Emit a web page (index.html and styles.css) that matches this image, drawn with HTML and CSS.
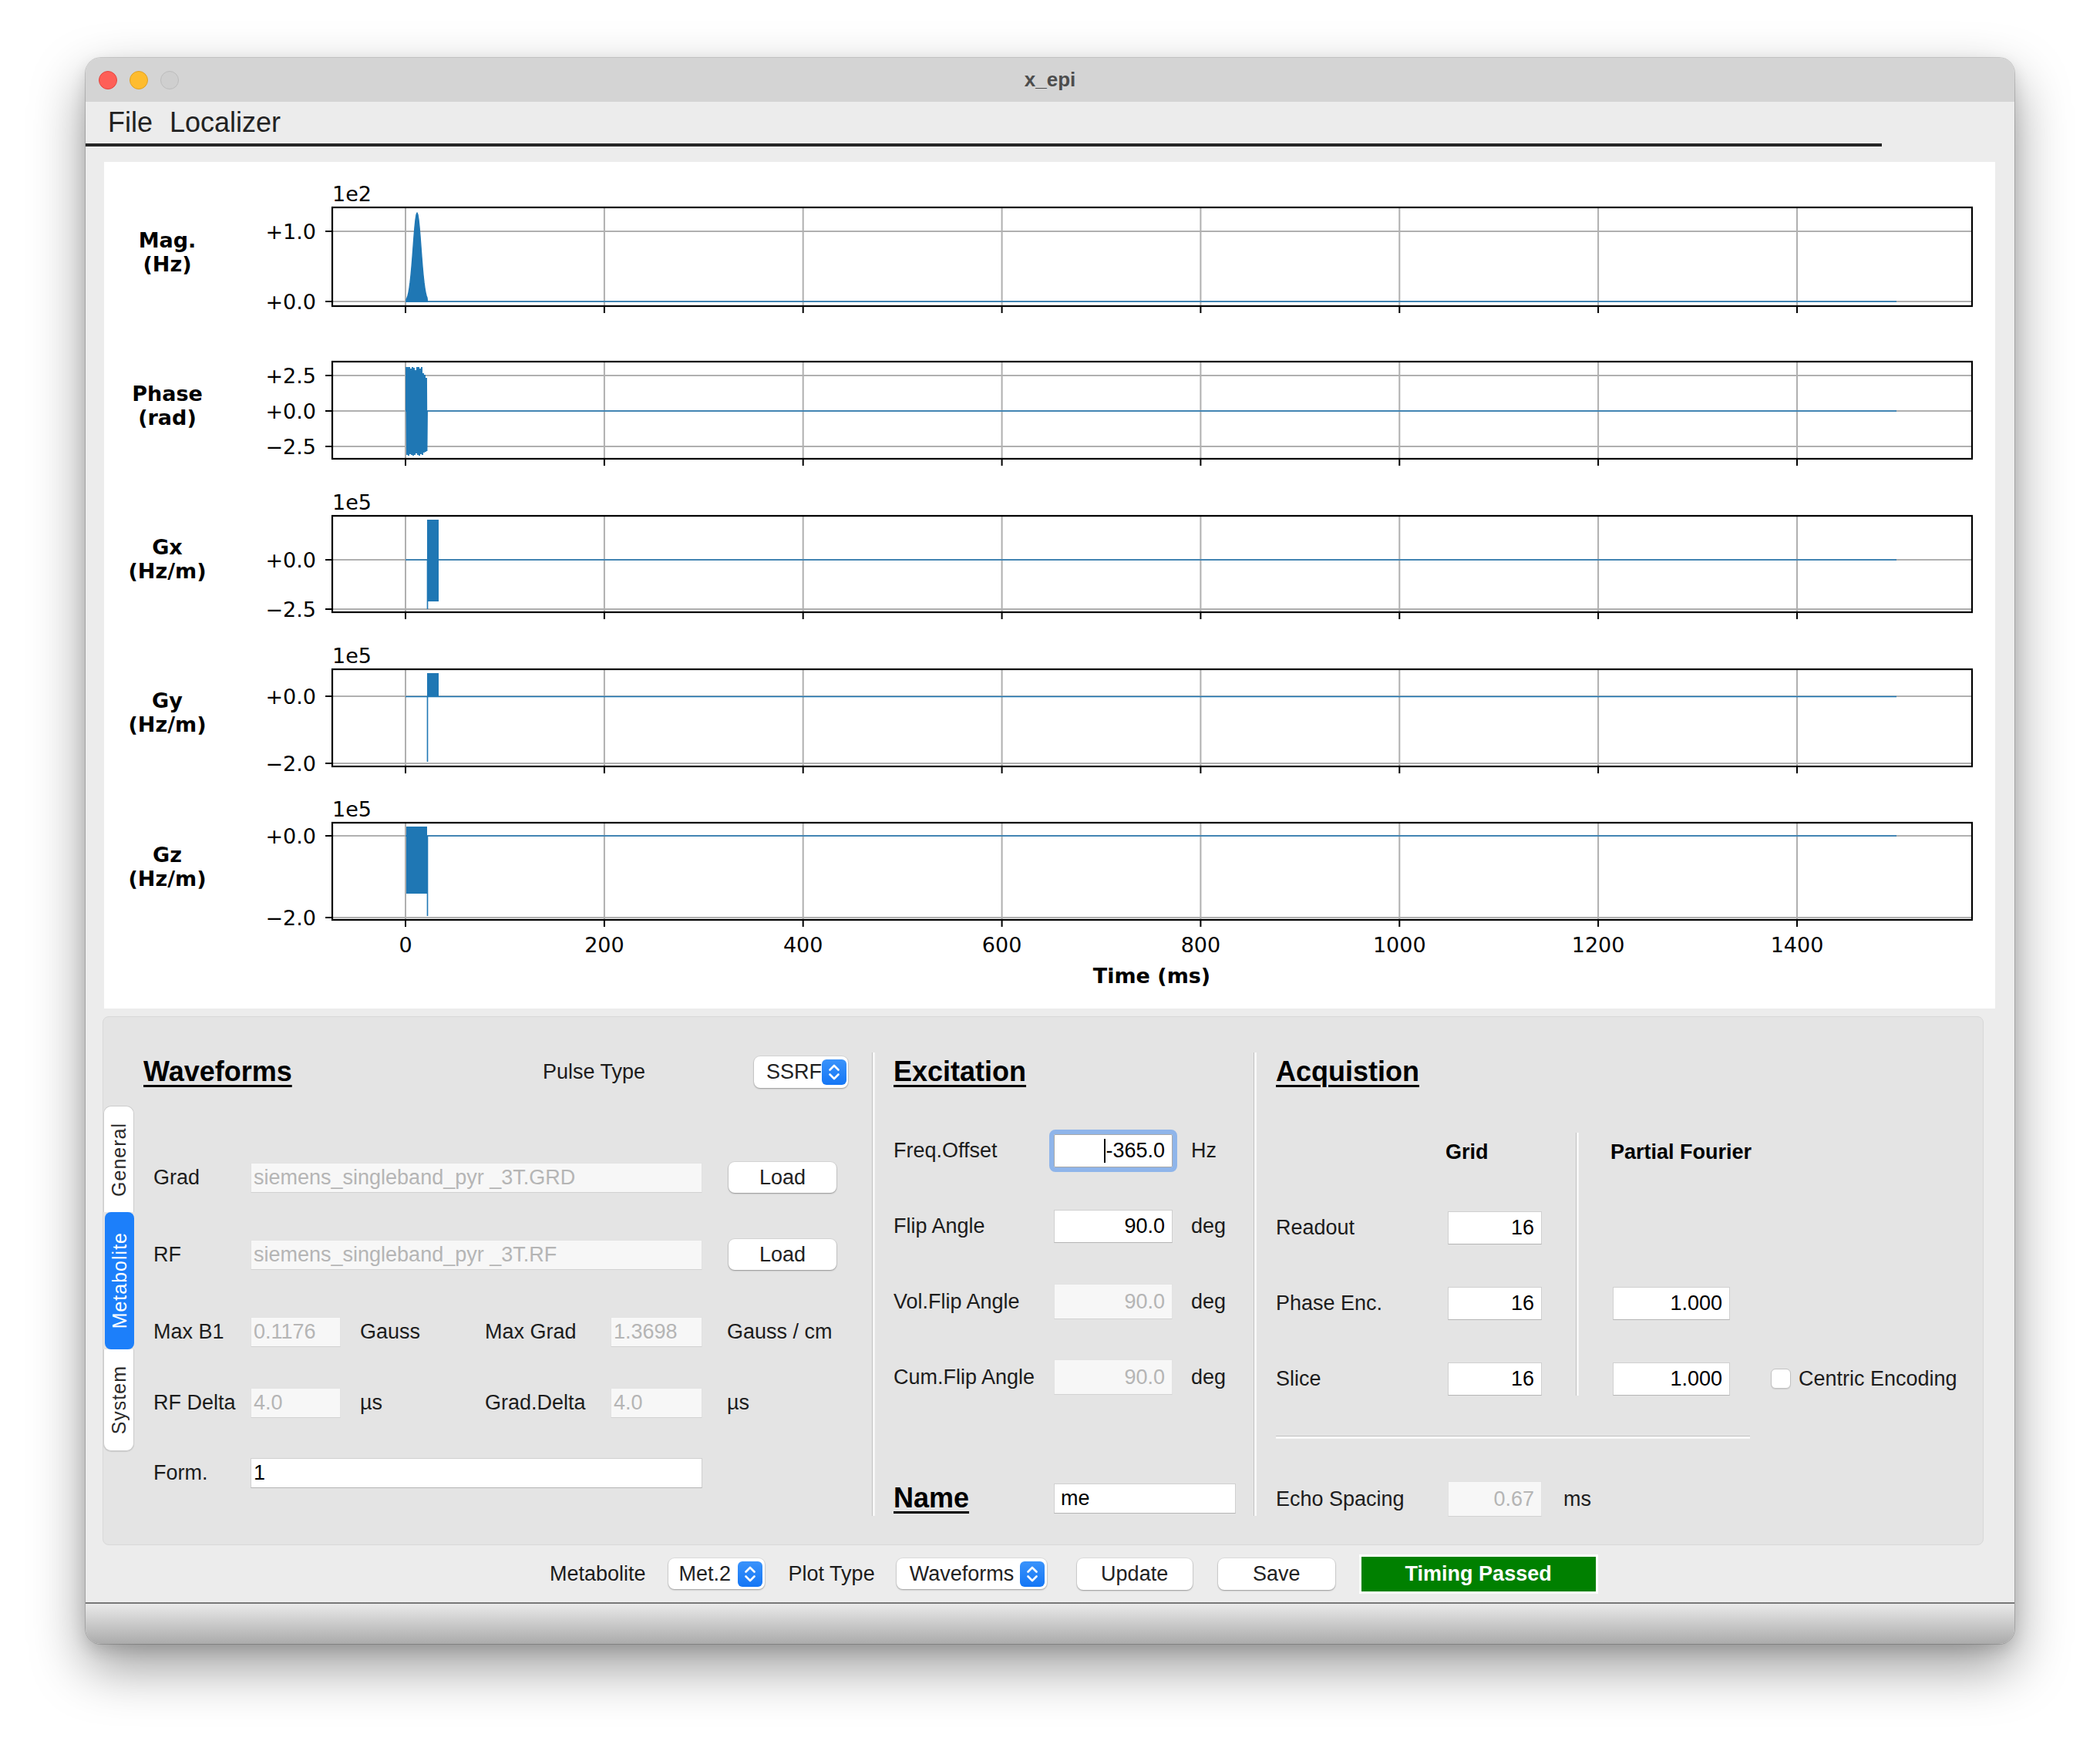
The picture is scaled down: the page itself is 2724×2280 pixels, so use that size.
FILE: index.html
```html
<!DOCTYPE html>
<html>
<head>
<meta charset="utf-8">
<title>x_epi</title>
<link rel="stylesheet" href="styles.css">
</head>
<body>
<div class="desktop">
  <div class="window">
    <div class="titlebar">
      <div class="lights"><span class="light red"></span><span class="light yellow"></span><span class="light gray"></span></div>
      <div class="title">x_epi</div>
      <div></div>
    </div>
    <div class="menubar"><span class="menu">File</span><span class="menu loc">Localizer</span></div>
    <div class="menuline"></div>

    <div class="plot">
      <svg class="chart" width="2453" height="1098" viewBox="135 210 2453 1098" xmlns="http://www.w3.org/2000/svg">
        <!-- grids -->
        <path class="grid" d="M526 269V397M783.9 269V397M1041.7 269V397M1299.6 269V397M1557.4 269V397M1815.3 269V397M2073.1 269V397M2331 269V397M431 300H2558M431 391H2558"/>
        <path class="grid" d="M526 469V595M783.9 469V595M1041.7 469V595M1299.6 469V595M1557.4 469V595M1815.3 469V595M2073.1 469V595M2331 469V595M431 487H2558M431 533H2558M431 579H2558"/>
        <path class="grid" d="M526 669V794M783.9 669V794M1041.7 669V794M1299.6 669V794M1557.4 669V794M1815.3 669V794M2073.1 669V794M2331 669V794M431 726H2558M431 790H2558"/>
        <path class="grid" d="M526 868V994M783.9 868V994M1041.7 868V994M1299.6 868V994M1557.4 868V994M1815.3 868V994M2073.1 868V994M2331 868V994M431 903H2558M431 990H2558"/>
        <path class="grid" d="M526 1067V1193M783.9 1067V1193M1041.7 1067V1193M1299.6 1067V1193M1557.4 1067V1193M1815.3 1067V1193M2073.1 1067V1193M2331 1067V1193M431 1084H2558M431 1190H2558"/>

        <!-- data -->
        <path class="dline" d="M526 391H2460M526 533H2460M526 726H2460M526 903.5H2460M526 1084H2460"/>
        <polygon class="dfill mag" points="527,391 527,388.2 528,386.3 529,383.4 530,379.3 531,373.6 532,366.2 533,357 534,346 535,333.5 536,320 537,306.5 538,294.5 539,285 540,278.6 541,276 542,278.6 543,285 544,294.5 545,306.5 546,320 547,333.5 548,346 549,357 550,366.2 551,373.6 552,379.3 553,383.4 554,386.3 554.5,391"/>
        <path class="dzig" d="M527 533L527 476L528 590L529 476L530 591L531 476L532 589L533 478L534 590L535 476L536 591L537 477L538 590L539 480L540 588L541 476L542 590L543 476L544 591L545 478L546 589L547 476L548 590L549 484L550 587L551 486L552 586L553 490L553.5 585L554 533"/>
        <rect class="dfill" x="554" y="674" width="15" height="106"/>
        <path class="dthin" d="M554.5 726V790"/>
        <rect class="dfill" x="554" y="873" width="15" height="31"/>
        <path class="dthin" d="M554.5 904V988"/>
        <rect class="dfill" x="527" y="1072" width="27" height="87"/>
        <path class="dthin" d="M554.5 1084V1188"/>

        <!-- spines -->
        <rect class="spine" x="431" y="269" width="2127" height="128"/>
        <rect class="spine" x="431" y="469" width="2127" height="126"/>
        <rect class="spine" x="431" y="669" width="2127" height="125"/>
        <rect class="spine" x="431" y="868" width="2127" height="126"/>
        <rect class="spine" x="431" y="1067" width="2127" height="126"/>

        <!-- ticks -->
        <path class="tick" d="M422 300H431M422 391H431M526 397v9M783.9 397v9M1041.7 397v9M1299.6 397v9M1557.4 397v9M1815.3 397v9M2073.1 397v9M2331 397v9"/>
        <path class="tick" d="M422 487H431M422 533H431M422 579H431M526 595v9M783.9 595v9M1041.7 595v9M1299.6 595v9M1557.4 595v9M1815.3 595v9M2073.1 595v9M2331 595v9"/>
        <path class="tick" d="M422 726H431M422 790H431M526 794v9M783.9 794v9M1041.7 794v9M1299.6 794v9M1557.4 794v9M1815.3 794v9M2073.1 794v9M2331 794v9"/>
        <path class="tick" d="M422 903H431M422 990H431M526 994v9M783.9 994v9M1041.7 994v9M1299.6 994v9M1557.4 994v9M1815.3 994v9M2073.1 994v9M2331 994v9"/>
        <path class="tick" d="M422 1084H431M422 1190H431M526 1193v9M783.9 1193v9M1041.7 1193v9M1299.6 1193v9M1557.4 1193v9M1815.3 1193v9M2073.1 1193v9M2331 1193v9"/>

        <!-- y tick labels -->
        <g class="ylab">
          <text x="410" y="310">+1.0</text>
          <text x="410" y="401">+0.0</text>
          <text x="410" y="497">+2.5</text>
          <text x="410" y="543">+0.0</text>
          <text x="410" y="589">−2.5</text>
          <text x="410" y="736">+0.0</text>
          <text x="410" y="800">−2.5</text>
          <text x="410" y="913">+0.0</text>
          <text x="410" y="1000">−2.0</text>
          <text x="410" y="1094">+0.0</text>
          <text x="410" y="1200">−2.0</text>
        </g>
        <g class="offlab">
          <text x="431" y="261">1e2</text>
          <text x="431" y="661">1e5</text>
          <text x="431" y="860">1e5</text>
          <text x="431" y="1059">1e5</text>
        </g>
        <g class="xlab">
          <text x="526" y="1235">0</text>
          <text x="783.9" y="1235">200</text>
          <text x="1041.7" y="1235">400</text>
          <text x="1299.6" y="1235">600</text>
          <text x="1557.4" y="1235">800</text>
          <text x="1815.3" y="1235">1000</text>
          <text x="2073.1" y="1235">1200</text>
          <text x="2331" y="1235">1400</text>
        </g>
        <text class="axtitle" x="1494" y="1275">Time (ms)</text>
        <g class="rowlab">
          <text x="217" y="321">Mag.</text>
          <text x="217" y="352">(Hz)</text>
          <text x="217" y="520">Phase</text>
          <text x="217" y="551">(rad)</text>
          <text x="217" y="719">Gx</text>
          <text x="217" y="750">(Hz/m)</text>
          <text x="217" y="918">Gy</text>
          <text x="217" y="949">(Hz/m)</text>
          <text x="217" y="1118">Gz</text>
          <text x="217" y="1149">(Hz/m)</text>
        </g>
      </svg>
    </div>

    <div class="panel">
      <div class="tabs">
        <div class="tab general"><span>General</span></div>
        <div class="tab active"><span>Metabolite</span></div>
        <div class="tab system"><span>System</span></div>
      </div>

      <section class="wave">
        <div class="wave-head">
          <h2 class="heading">Waveforms</h2>
          <span class="lbl">Pulse Type</span>
          <div class="combo ssrf"><span>SSRF</span><span class="stepper"><svg width="32" height="33" viewBox="0 0 32 33"><path class="chev" d="M10.5 13.5L16 8L21.5 13.5M10.5 19.5L16 25L21.5 19.5"/></svg></span></div>
        </div>
        <div class="wave-grid">
          <span class="lbl">Grad</span>
          <div class="field dis long">siemens_singleband_pyr _3T.GRD</div>
          <button class="btn load">Load</button>

          <span class="lbl">RF</span>
          <div class="field dis long">siemens_singleband_pyr _3T.RF</div>
          <button class="btn load">Load</button>

          <span class="lbl">Max B1</span>
          <div class="field dis">0.1176</div>
          <span class="lbl unit1">Gauss</span>
          <span class="lbl">Max Grad</span>
          <div class="field dis">1.3698</div>
          <span class="lbl unit2">Gauss / cm</span>

          <span class="lbl">RF Delta</span>
          <div class="field dis">4.0</div>
          <span class="lbl unit1">µs</span>
          <span class="lbl">Grad.Delta</span>
          <div class="field dis">4.0</div>
          <span class="lbl unit2">µs</span>

          <span class="lbl">Form.</span>
          <div class="field long">1</div>
        </div>
      </section>

      <div class="vsep"></div>

      <section class="exc">
        <div class="sec-head"><h2 class="heading">Excitation</h2></div>
        <div class="exc-grid">
          <span class="lbl">Freq.Offset</span>
          <div class="field num focus"><span class="caret"></span>-365.0</div>
          <span class="lbl unit">Hz</span>

          <span class="lbl">Flip Angle</span>
          <div class="field num">90.0</div>
          <span class="lbl unit">deg</span>

          <span class="lbl">Vol.Flip Angle</span>
          <div class="field num dis tall">90.0</div>
          <span class="lbl unit">deg</span>

          <span class="lbl">Cum.Flip Angle</span>
          <div class="field num dis tall">90.0</div>
          <span class="lbl unit">deg</span>

          <h2 class="heading name-head">Name</h2>
          <div class="field name">me</div>
        </div>
      </section>

      <div class="vsep"></div>

      <section class="acq">
        <div class="sec-head"><h2 class="heading">Acquistion</h2></div>
        <div class="acq-grid">
          <span class="colhead c2">Grid</span>
          <span class="colhead c6">Partial Fourier</span>
          <div class="isep"></div>

          <span class="lbl r2">Readout</span>
          <div class="field num c2 r2">16</div>

          <span class="lbl r3">Phase Enc.</span>
          <div class="field num c2 r3">16</div>
          <div class="field num c6 r3">1.000</div>

          <span class="lbl r4">Slice</span>
          <div class="field num c2 r4">16</div>
          <div class="field num c6 r4">1.000</div>
          <span class="check r4"></span>
          <span class="lbl checklbl r4">Centric Encoding</span>

          <div class="hsep"></div>

          <span class="lbl r6">Echo Spacing</span>
          <div class="field num dis tall c2 r6">0.67</div>
          <span class="lbl ms r6">ms</span>
        </div>
      </section>
    </div>

    <div class="toolbar">
      <span class="lbl">Metabolite</span>
      <div class="combo met"><span>Met.2</span><span class="stepper"><svg width="32" height="33" viewBox="0 0 32 33"><path class="chev" d="M10.5 13.5L16 8L21.5 13.5M10.5 19.5L16 25L21.5 19.5"/></svg></span></div>
      <span class="lbl plotlbl">Plot Type</span>
      <div class="combo wf"><span>Waveforms</span><span class="stepper"><svg width="32" height="33" viewBox="0 0 32 33"><path class="chev" d="M10.5 13.5L16 8L21.5 13.5M10.5 19.5L16 25L21.5 19.5"/></svg></span></div>
      <button class="btn update">Update</button>
      <button class="btn save">Save</button>
      <div class="timing">Timing Passed</div>
    </div>
    <div class="bottomline"></div>
    <div class="statusbar"></div>
  </div>
</div>
</body>
</html>
```

FILE: styles.css
```css
* { box-sizing: border-box; margin: 0; padding: 0; }
html, body { width: 2724px; height: 2280px; background: #ffffff; overflow: hidden; }
body { font-family: "Liberation Sans", Arial, sans-serif; color: #1c1c1c; }

.desktop { padding: 75px 0 0 111px; }

.window {
  width: 2502px; height: 2057px;
  border-radius: 20px; overflow: hidden;
  background: #ececec;
  display: flex; flex-direction: column;
  box-shadow: 0 0 0 1px rgba(0,0,0,0.16), 0 30px 70px rgba(0,0,0,0.40), 0 8px 20px rgba(0,0,0,0.12);
}

/* title bar */
.titlebar {
  height: 57px; flex: none; background: #d4d4d4;
  display: grid; grid-template-columns: 1fr auto 1fr; align-items: center;
}
.lights { display: flex; gap: 16px; padding-left: 17px; }
.light { width: 24px; height: 24px; border-radius: 50%; display: block; }
.light.red { background: #fe5f57; border: 1px solid #e2463f; }
.light.yellow { background: #febc2e; border: 1px solid #dfa023; }
.light.gray { background: #cfcfcf; border: 1px solid #bcbcbc; }
.title { font-size: 26px; font-weight: bold; color: #4d4d4d; }

/* menu */
.menubar { height: 54px; flex: none; display: flex; align-items: center; padding-left: 29px; font-size: 36px; color: #222; }
.menu.loc { margin-left: 22px; }
.menuline { height: 4px; width: 2330px; flex: none; background: #262626; }

/* plot */
.plot { margin: 20px 0 0 24px; width: 2453px; height: 1098px; flex: none; background: #fff; }
.chart { display: block; font-family: "DejaVu Sans", sans-serif; }
.grid { stroke: #b0b0b0; stroke-width: 2; fill: none; }
.spine { stroke: #000; stroke-width: 2.2; fill: none; }
.tick { stroke: #000; stroke-width: 2; fill: none; }
.dline { stroke: #1f77b4; stroke-width: 1.6; fill: none; }
.dthin { stroke: #1f77b4; stroke-width: 1.6; fill: none; }
.dzig { stroke: #1f77b4; stroke-width: 1.9; fill: none; stroke-linejoin: miter; }
.dfill { fill: #1f77b4; }
.dfill.mag { stroke: #1f77b4; stroke-width: 1.4; stroke-linejoin: round; }
.ylab text { font-size: 27px; text-anchor: end; fill: #000; }
.offlab text { font-size: 27px; fill: #000; }
.xlab text { font-size: 27px; text-anchor: middle; fill: #000; }
.axtitle { font-size: 27px; font-weight: bold; text-anchor: middle; fill: #000; }
.rowlab text { font-size: 27px; font-weight: bold; text-anchor: middle; fill: #000; }

/* panel */
.panel {
  margin: 10px 0 0 22px; width: 2440px; height: 686px; flex: none;
  background: #e4e4e4; border: 1px solid #d8d8d8; border-radius: 8px;
  display: flex; align-items: flex-start;
}
.lbl { font-size: 27px; color: #1c1c1c; white-space: nowrap; }
.heading { font-size: 36px; font-weight: bold; color: #000; text-decoration: underline; text-decoration-thickness: 3px; text-underline-offset: 5px; white-space: nowrap; }

.tabs { margin-top: 115px; width: 40px; display: flex; flex-direction: column; flex: none; }
.tab { display: flex; align-items: center; justify-content: center; background: #fff; font-size: 25px; letter-spacing: 1px; color: #2b2b2b; }
.tab span { writing-mode: vertical-rl; transform: rotate(180deg); white-space: nowrap; }
.tab.general { height: 138px; border: 1px solid #cdcdcd; border-bottom: none; border-radius: 10px 10px 0 0; }
.tab.active { height: 178px; background: #1c7ffa; color: #fff; border-radius: 8px; margin-left: 2px; }
.tab.system { height: 132px; border: 1px solid #cdcdcd; border-top: none; border-radius: 0 0 10px 10px; box-shadow: 0 1px 1px rgba(0,0,0,0.12); }

/* fields & buttons */
.field {
  height: 39px; font-size: 27px; color: #000;
  display: flex; align-items: center; padding: 0 3px;
  background: #fff; border: 1px solid #d0d0d0; border-bottom-color: #b5b5b5;
  white-space: nowrap; overflow: hidden;
}
.field.dis { background: #f7f7f7; color: #b5b5b5; border-color: #e2e2e2; border-bottom-color: #d2d2d2; }
.field.num { justify-content: flex-end; padding-right: 9px; height: 43px; }
.field.tall { height: 46px; }
.long { grid-column: 2 / 6; }

.btn {
  font-family: "Liberation Sans", Arial, sans-serif; font-size: 27px; color: #222;
  background: #fff; border: none; border-radius: 8px;
  box-shadow: 0 1px 2px rgba(0,0,0,0.32), 0 0 0 1px rgba(0,0,0,0.06);
}
.btn.load { margin-left: 34px; width: 140px; height: 40px; }

.combo {
  height: 41px; background: #fff; border-radius: 8px;
  box-shadow: 0 1px 2px rgba(0,0,0,0.3), 0 0 0 1px rgba(0,0,0,0.06);
  display: flex; align-items: center; justify-content: space-between;
  padding: 0 3px 0 16px; font-size: 27px; color: #222;
}
.stepper { width: 32px; height: 33px; border-radius: 6px; background: linear-gradient(#3a93fb, #1476f5); display: flex; }
.chev { stroke: #fff; stroke-width: 2.6; fill: none; stroke-linecap: round; stroke-linejoin: round; }

/* waveforms section */
.wave { margin-left: 12px; width: 945px; padding-top: 41px; flex: none; }
.wave-head { display: grid; grid-template-columns: 518px 274px 122px; height: 60px; align-items: center; }
.wave-grid {
  margin-top: 57px; padding-left: 13px;
  display: grid;
  grid-template-columns: 126px 117px 187px 163px 119px 174px;
  grid-template-rows: 100px 100px 100px 84px 98px;
  align-items: center;
}
.unit1 { padding-left: 25px; }
.unit2 { margin-left: 32px; }

/* separators */
.vsep { width: 4px; height: 601px; margin-top: 46px; flex: none; background: #f7f7f7; border-left: 1px solid #c2c2c2; }

/* excitation */
.exc { width: 491px; padding: 41px 0 0 24px; flex: none; }
.sec-head { height: 60px; display: flex; align-items: center; }
.exc-grid {
  margin-top: 23px;
  display: grid;
  grid-template-columns: 208px 154px 82px;
  grid-template-rows: 98px 98px 98px 98px 216px;
  align-items: center;
}
.unit { padding-left: 24px; }
.field.focus { outline: 6px solid #8fb5ea; border-radius: 2px; border-color: #a9a9a9; }
.caret { width: 2px; height: 31px; background: #000; display: block; }
.name-head { grid-column: 1; }
.field.name { grid-column: 2 / 4; width: 236px; padding-left: 8px; }

/* acquisition */
.acq { flex: 1; padding: 41px 0 0 25px; }
.acq-grid {
  margin-top: 25px;
  display: grid;
  grid-template-columns: 223px 122px 44px 4px 44px 152px 53px 26px auto;
  grid-template-rows: 98px 98px 98px 98px 54px 106px;
  align-items: center;
}
.colhead { font-size: 27px; font-weight: bold; color: #000; white-space: nowrap; grid-row: 1; }
.colhead.c2 { grid-column: 2; margin-left: -3px; }
.colhead.c6 { grid-column: 6; margin-left: -3px; }
.c2 { grid-column: 2; }
.c6 { grid-column: 6; }
.acq-grid .lbl { grid-column: 1; }
.r2 { grid-row: 2; }
.r3 { grid-row: 3; }
.r4 { grid-row: 4; }
.r6 { grid-row: 6; }
.isep { grid-column: 4; grid-row: 1 / 5; align-self: stretch; margin: 24px 0 27px; background: #f7f7f7; border-left: 1px solid #c2c2c2; }
.check { grid-column: 8; width: 26px; height: 26px; background: #fff; border: 1px solid #c2c2c2; border-radius: 6px; box-shadow: 0 1px 1px rgba(0,0,0,0.1); display: block; }
.acq-grid .checklbl { grid-column: 9; margin-left: 10px; }
.hsep { grid-row: 5; grid-column: 1 / 9; width: 615px; height: 4px; background: #f8f8f8; border-top: 1px solid #c2c2c2; }
.acq-grid .ms { grid-column: 3 / 8; padding-left: 28px; }

/* toolbar */
.toolbar { height: 74px; flex: none; display: flex; align-items: center; padding-left: 602px; }
.combo.met { margin-left: 29px; width: 125px; height: 40px; padding-left: 14px; }
.plotlbl { margin-left: 31px; }
.combo.wf { margin-left: 28px; width: 195px; height: 40px; padding-left: 17px; }
.btn.update { margin-left: 39px; width: 150px; height: 41px; }
.btn.save { margin-left: 33px; width: 152px; height: 41px; }
.timing {
  margin-left: 31px; width: 310px; height: 51px;
  background: #008000; border: 3px solid #fff;
  color: #fff; font-size: 27px; font-weight: bold;
  display: flex; align-items: center; justify-content: center;
}
.bottomline { height: 2px; flex: none; background: #777; }
.statusbar { flex: 1; background: linear-gradient(#e9e9e9, #ababab); }
```
